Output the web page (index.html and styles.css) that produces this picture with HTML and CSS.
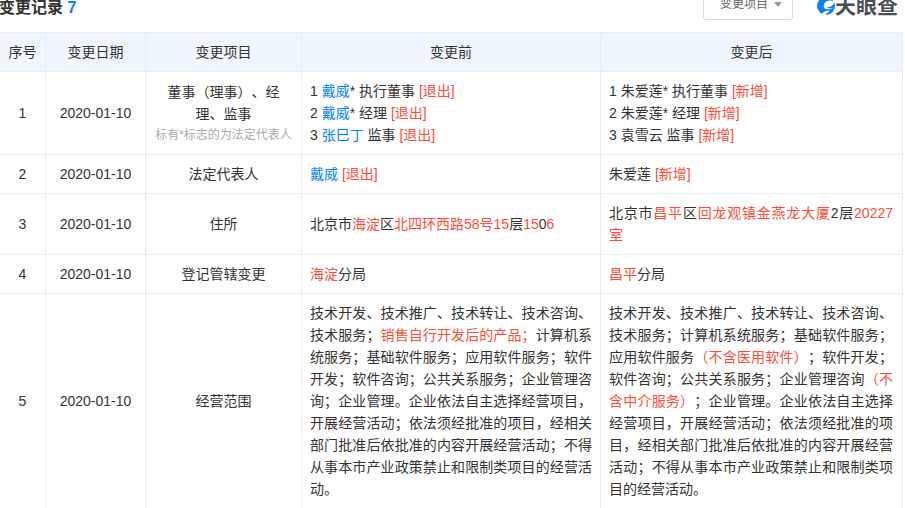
FILE: index.html
```html
<!DOCTYPE html>
<html lang="zh">
<head>
<meta charset="utf-8">
<title>变更记录</title>
<link rel="stylesheet" href="styles.css">
</head>
<body>
<div class="page">
  <header class="head">
    <h2 class="title">变更记录 <span class="count">7</span></h2>
    <div class="tools">
      <div class="select"><span>变更项目</span><i class="caret"></i></div>
      <div class="logo">
        <svg class="logo-icon" viewBox="0 0 20 20" width="18" height="18"><circle cx="10" cy="10" r="10" fill="#0f80f0"/><path d="M20 5C14 2.500 8 5 7.500 9.500 7 14 13 15.500 20 11 16 13 12.500 13 11 11.500 14 11.500 17 10 19 7.500z" fill="#fff"/><path d="M5 20c2-4.500 5.500-5.500 10-4.500-3 1-5 3-6 5.500z" fill="#fff"/></svg>
        <span class="logo-text">天眼查</span>
      </div>
    </div>
  </header>
  <table class="records">
    <colgroup><col class="c1"><col class="c2"><col class="c3"><col class="c4"><col class="c5"></colgroup>
    <thead>
      <tr><th>序号</th><th>变更日期</th><th>变更项目</th><th>变更前</th><th>变更后</th></tr>
    </thead>
    <tbody>
      <tr>
        <td class="mid">1</td><td class="mid">2020-01-10</td>
        <td class="mid">董事（理事）、经理、监事<div class="note">标有*标志的为法定代表人</div></td>
        <td>1 <a>戴威</a>* 执行董事 <em>[退出]</em><br>2 <a>戴威</a>* 经理 <em>[退出]</em><br>3 <a>张巳丁</a> 监事 <em>[退出]</em></td>
        <td>1 朱爱莲* 执行董事 <em>[新增]</em><br>2 朱爱莲* 经理 <em>[新增]</em><br>3 袁雪云 监事 <em>[新增]</em></td>
      </tr>
      <tr>
        <td class="mid">2</td><td class="mid">2020-01-10</td><td class="mid">法定代表人</td>
        <td><a>戴威</a> <em>[退出]</em></td>
        <td>朱爱莲 <em>[新增]</em></td>
      </tr>
      <tr>
        <td class="mid">3</td><td class="mid">2020-01-10</td><td class="mid">住所</td>
        <td>北京市<em>海淀</em>区<em>北四环西路58号15</em>层<em>15</em>0<em>6</em></td>
        <td>北京市<em>昌平</em>区<em>回龙观镇金燕龙大厦</em>2层<em>20227室</em></td>
      </tr>
      <tr>
        <td class="mid">4</td><td class="mid">2020-01-10</td><td class="mid">登记管辖变更</td>
        <td><em>海淀</em>分局</td>
        <td><em>昌平</em>分局</td>
      </tr>
      <tr>
        <td class="mid">5</td><td class="mid">2020-01-10</td><td class="mid">经营范围</td>
        <td>技术开发、技术推广、技术转让、技术咨询、技术服务；<em>销售自行开发后的产品；</em>计算机系统服务；基础软件服务；应用软件服务；软件开发；软件咨询；公共关系服务；企业管理咨询；企业管理。企业依法自主选择经营项目，开展经营活动；依法须经批准的项目，经相关部门批准后依批准的内容开展经营活动；不得从事本市产业政策禁止和限制类项目的经营活动。</td>
        <td>技术开发、技术推广、技术转让、技术咨询、技术服务；计算机系统服务；基础软件服务；应用软件服务<em>（不含医用软件）</em>；软件开发；软件咨询；公共关系服务；企业管理咨询<em>（不含中介服务）</em>；企业管理。企业依法自主选择经营项目，开展经营活动；依法须经批准的项目，经相关部门批准后依批准的内容开展经营活动；不得从事本市产业政策禁止和限制类项目的经营活动。</td>
      </tr>
    </tbody>
  </table>
</div>
</body>
</html>
```

FILE: styles.css
```css
html, body {
  margin: 0;
  padding: 0;
  height: 100%;
  overflow: hidden;
  background: #fff;
}
.page {
  width: 905px;
  height: 508px;
  overflow: hidden;
  font-family: "Liberation Sans", "Noto Sans CJK SC", sans-serif;
  font-size: 14px;
  line-height: 22px;
  color: #333;
  text-spacing-trim: space-all;
}
.head {
  display: flex;
  justify-content: space-between;
  height: 32px;
  margin-top: -5px;
  padding-bottom: 5px;
}
.title {
  margin: 1px 0 0 -1px;
  font-size: 16px;
  line-height: 24px;
  font-weight: 700;
  color: #333;
}
.count { color: #0084ff; }
.tools {
  display: flex;
  align-items: flex-start;
  margin-top: -9px;
}
.select {
  display: flex;
  align-items: flex-start;
  gap: 6px;
  box-sizing: border-box;
  width: 90px;
  height: 34px;
  padding-left: 16px;
  border: 1px solid #d9d9d9;
  border-radius: 3px;
  font-size: 12px;
  line-height: 34px;
  color: #666;
}
.caret {
  width: 0;
  height: 0;
  margin-top: 15px;
  border-left: 4px solid transparent;
  border-right: 4px solid transparent;
  border-top: 5px solid #999;
}
.logo {
  display: flex;
  align-items: center;
  width: 86px;
  margin-left: 24px;
  margin-right: 2px;
  padding-top: 8px;
}
.logo-icon { flex: none; }
.logo-text {
  font-size: 21px;
  line-height: 24px;
  font-weight: 700;
  color: #4a4f57;
  white-space: nowrap;
}
.records {
  table-layout: fixed;
  border-collapse: collapse;
  width: 903px;
  margin-left: -1px;
}
.c1 { width: 46px; }
.c2 { width: 100px; }
.c3 { width: 156px; }
.c4 { width: 299px; }
.c5 { width: 302px; }
.records th,
.records td {
  border: 1px solid #e3eef8;
  padding: 8px;
  font-weight: 400;
  text-align: justify;
  vertical-align: middle;
  word-break: break-all;
}
.records td:last-child { padding-right: 9px; }
.records th {
  background: #eef5fc;
  text-align: center;
}
.records .mid { text-align: center; }
.records a { color: #0084ff; }
.records em { font-style: normal; color: #ff4d38; }
.note {
  font-size: 12px;
  line-height: 20px;
  color: #aaa;
}
```
